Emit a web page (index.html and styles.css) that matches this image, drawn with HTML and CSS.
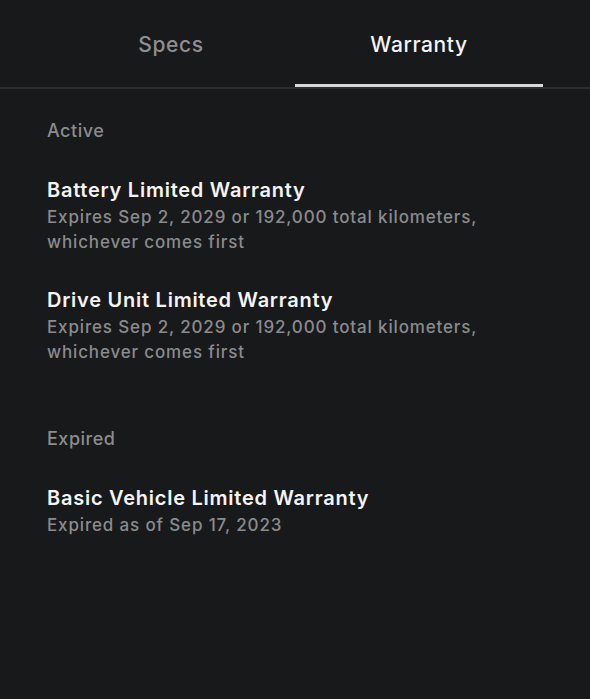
FILE: index.html
```html
<!DOCTYPE html>
<html lang="en">
<head>
  <meta charset="UTF-8">
  <title>Warranty</title>
  <link rel="stylesheet" href="styles.css">
</head>
<body>

  <div class="tabs">
    <div class="tab">Specs</div>
    <div class="tab active">Warranty</div>
  </div>

  <div class="content">
    <div class="section">
      <div class="section-title">Active</div>

      <div class="item">
        <div class="item-title">Battery Limited Warranty</div>
        <div class="item-sub">Expires Sep 2, 2029 or 192,000 total kilometers, whichever comes first</div>
      </div>

      <div class="item">
        <div class="item-title">Drive Unit Limited Warranty</div>
        <div class="item-sub">Expires Sep 2, 2029 or 192,000 total kilometers, whichever comes first</div>
      </div>
    </div>

    <div class="section">
      <div class="section-title">Expired</div>

      <div class="item">
        <div class="item-title">Basic Vehicle Limited Warranty</div>
        <div class="item-sub">Expired as of Sep 17, 2023</div>
      </div>
    </div>
  </div>

</body>
</html>
```

FILE: styles.css
```css
body {
  margin: 0;
  background-color: #18191b;
  font-family: Inter, "Noto Sans", sans-serif;
  -webkit-font-smoothing: antialiased;
}

.tabs {
  display: flex;
  padding: 0 47px;
  border-bottom: 2px solid #2c2d2f;
}

.tab {
  flex: 1;
  height: 87px;
  line-height: 90px;
  text-align: center;
  font-size: 21px;
  font-weight: 500;
  letter-spacing: 0.6px;
  color: #8f8f91;
  box-sizing: border-box;
}

.tab.active {
  color: #f4f4f4;
  border-bottom: 3px solid #d9d9d9;
  margin-bottom: -1px;
}

.content {
  padding: 31px 47px;
}

.section {
  margin-bottom: 63px;
}

.section-title {
  font-size: 18px;
  font-weight: 500;
  letter-spacing: 0.5px;
  color: #8c8c8e;
  margin-bottom: 36px;
}

.item {
  margin-bottom: 32px;
}

.item-title {
  font-size: 20px;
  font-weight: 600;
  letter-spacing: 0.75px;
  color: #f4f4f4;
  line-height: 26px;
  margin-bottom: 2px;
}

.item-sub {
  font-size: 17px;
  font-weight: 500;
  letter-spacing: 0.85px;
  color: #8a8b8d;
  line-height: 25px;
  max-width: 450px;
}
```
